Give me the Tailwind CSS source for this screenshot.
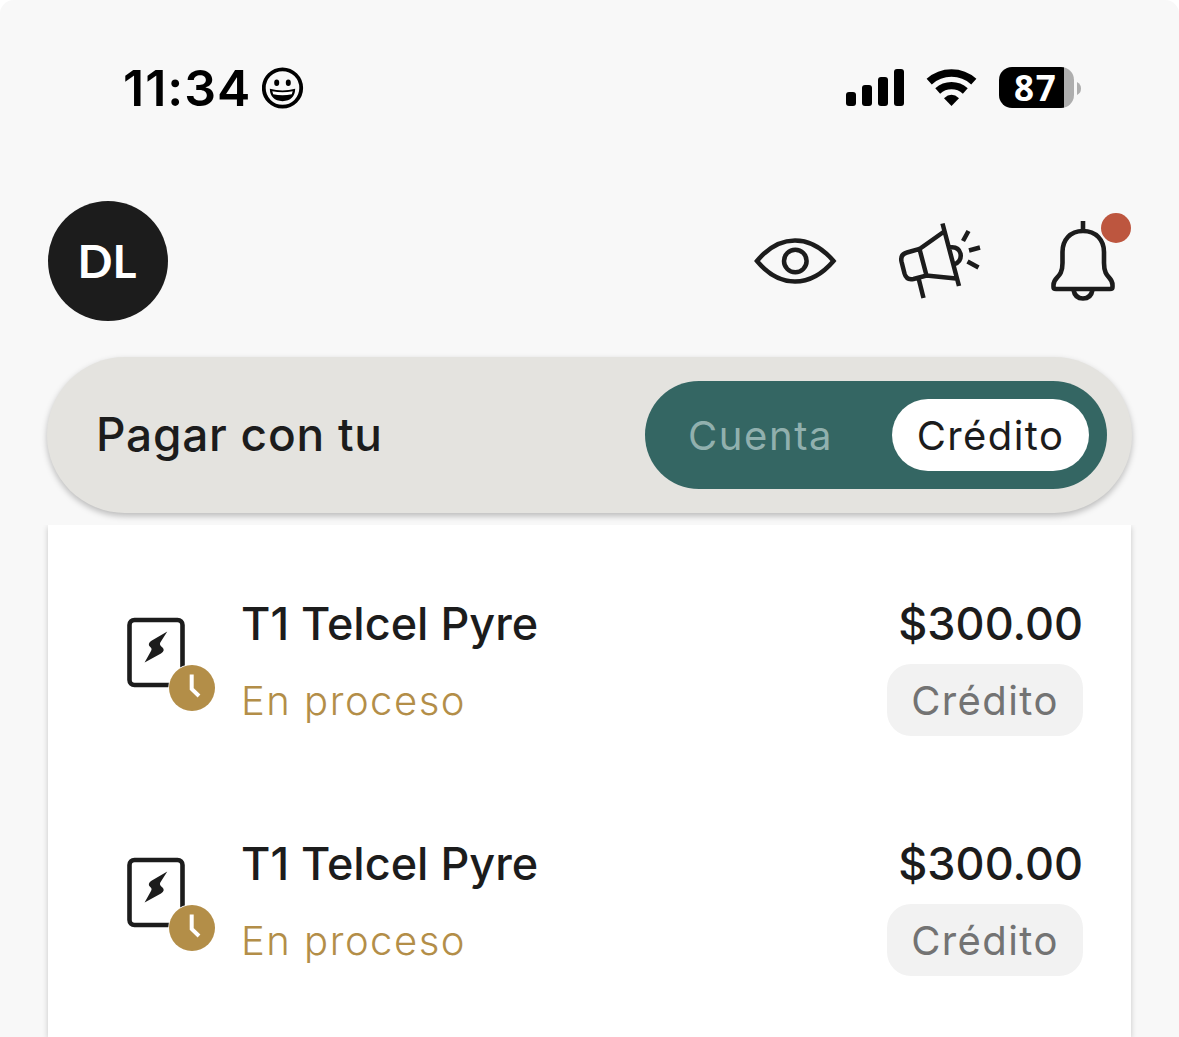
<!DOCTYPE html>
<html lang="es">
<head>
<meta charset="utf-8">
<title>Pagos</title>
<script src="https://cdn.jsdelivr.net/npm/@tailwindcss/browser@4"></script>
</head>
<body class="bg-white font-['Inter',sans-serif] text-[#1c1c1c]">
<svg class="hidden">
  <symbol id="receipt" viewBox="120 610 100 106">
    <rect x="129.500" y="620" width="53" height="65" rx="5" fill="none" stroke="#1c1c1c" stroke-width="4.600"/>
    <path d="M167.300 631.500L151 641Q147.200 644 150 646.800Q152.500 648.500 151 651L144.600 662.500L161 653.500Q165.500 650.500 162.500 647.500Q159 645 160.300 642.500Z" fill="#1c1c1c"/>
    <circle cx="192" cy="688" r="23.800" fill="#fff"/>
    <circle cx="192" cy="688" r="23" fill="#b38e48"/>
    <path d="M191.700 674.500V689L199 696" fill="none" stroke="#fff" stroke-width="4"/>
  </symbol>
</svg>
<div class="w-[1179px] h-[1037px] overflow-hidden bg-[#f8f8f8] rounded-t-[14px] flex flex-col">
  <header class="h-[176px] pl-[123px] pr-[98px] flex items-center">
    <span class="text-[50px] leading-[60px] font-semibold text-black w-[139px] tracking-[1px] whitespace-nowrap">11:34</span>
    <svg class="w-[42px] h-[42px]" viewBox="0 0 42 42">
      <circle cx="20.500" cy="21" r="18.700" fill="none" stroke="#000" stroke-width="3.800"/>
      <ellipse cx="14.700" cy="15.800" rx="2.500" ry="3.200"/><ellipse cx="26.300" cy="15.800" rx="2.500" ry="3.200"/>
      <path d="M7.800 21.800Q20.500 25 33.200 21.800Q32.800 33.800 20.500 34.200Q8.200 33.800 7.800 21.800Z"/>
      <path d="M10.300 24.200Q20.500 26.500 30.700 24.200L29.800 27.200Q20.500 29.200 11.200 27.200Z" fill="#fff"/>
    </svg>
    <svg class="ml-auto w-[60px] h-[38px]" viewBox="0 0 60 38">
      <rect x="1" y="23" width="10" height="14" rx="3"/><rect x="17" y="16" width="10" height="21" rx="3"/><rect x="33" y="8" width="10" height="29" rx="3"/><rect x="49" y="0" width="10" height="37" rx="3"/>
    </svg>
    <svg class="ml-[20px] w-[54px] h-[38px]" viewBox="0 0 54 38">
      <path d="M4.200 12.600A33.200 33.200 0 0 1 48.800 12.600" fill="none" stroke="#000" stroke-width="7.700"/>
      <path d="M12.700 22A20.500 20.500 0 0 1 40.300 22" fill="none" stroke="#000" stroke-width="7.200"/>
      <path d="M26.500 37L19 29.200Q26.500 22.500 34 29.200Z"/>
    </svg>
    <div class="ml-[20px] mb-[1px] w-[75px] h-[41px] rounded-[13px] bg-[linear-gradient(to_right,#000_65px,#aeaeae_65px)] text-white pl-[15px] font-['Open_Sans',sans-serif] font-bold text-[35px] leading-[41px] tracking-[1.800px]">87</div>
    <svg class="ml-[3px] w-[4px] h-[13px]" viewBox="0 0 4 13"><path d="M0 0Q4 2 4 6.500Q4 11 0 13Z" fill="#aeaeae"/></svg>
  </header>

  <div class="h-[181px] pl-[48px] pt-[25px] flex items-start">
    <div class="w-[120px] h-[120px] rounded-full bg-[#1c1c1c] text-white flex items-center justify-center font-['Lato',sans-serif] font-bold text-[46px]"><span class="-mt-[2px] -ml-[2px]">DL</span></div>
    <svg class="ml-[572px] w-[260px] h-[120px]" viewBox="740 201 260 120" fill="none" stroke="#1c1c1c" stroke-width="4.500">
      <path d="M757 261Q774 240.500 795 240.500Q816 240.500 833.500 261Q816 281.500 795 281.500Q774 281.500 757 261Z"/>
      <circle cx="795.300" cy="261" r="11.300"/>
      <path d="M942.500 223.500L959 286M943.500 232L919.500 249L907 252.500Q900 254.500 901.500 261.500L904.500 273.500Q906.500 280.500 913.500 279L926.500 275.500L956 278.500M919.500 249L926.500 275.500M918.500 278L923.500 298M949 247.500Q958.500 246 960.500 253.500Q962 261.500 954 264.500M963 241L968.500 231M969 250.500L980 247.500M967.500 261.500L978.500 267.500"/>
    </svg>
    <svg class="ml-[30px] w-[120px] h-[120px]" viewBox="1030 201 120 120">
      <path d="M1083 221V231M1083 231C1070 231 1062.500 240 1062.500 252V263C1062.500 279 1053.500 276 1053.500 285V287Q1053.500 289 1056 289H1110Q1112.500 289 1112.500 287V285C1112.500 276 1104 279 1104 263V252C1104 240 1096 231 1083 231ZM1073.500 290Q1075 298.500 1083 298.500Q1091 298.500 1092.500 290" fill="none" stroke="#1c1c1c" stroke-width="4.600"/>
      <circle cx="1116" cy="228" r="15" fill="#bd563f"/>
    </svg>
  </div>

  <section class="relative z-10 mx-[47px] h-[156px] shrink-0 rounded-[78px] bg-[#e4e3df] shadow-[0_3px_6px_rgba(0,0,0,0.25)] flex items-center justify-between pl-[49px] pr-[25px]">
    <span class="-mt-[3px] text-[46px] leading-[56px] font-[450] tracking-[0.750px] whitespace-nowrap">Pagar con tu</span>
    <div class="w-[462px] h-[108px] rounded-full bg-[#346663] flex items-center pl-[43px] pr-[18px] justify-between text-[40px] leading-[48px]">
      <span class="mt-[2px] text-[#91b0ae] font-normal tracking-[1.600px]">Cuenta</span>
      <span class="w-[197px] h-[72px] rounded-full bg-white flex items-center justify-center pt-[2px] font-normal tracking-[1.400px]">Crédito</span>
    </div>
  </section>

  <main class="mt-[12px] ml-[48px] w-[1083px] h-[512px] shrink-0 bg-white shadow-[0_2px_6px_rgba(0,0,0,0.2)] [clip-path:inset(0_-8px_0_-8px)] pt-[60px]">
    <article class="h-[240px] pl-[72px] pr-[48px] flex items-start">
      <svg class="mt-[25px] w-[100px] h-[106px]"><use href="#receipt"/></svg>
      <div class="ml-[21px] pt-[12px]">
        <div class="text-[45px] leading-[54px] font-[450] tracking-[0px] whitespace-nowrap">T1 Telcel Pyre</div>
        <div class="mt-[24px] text-[40px] leading-[52px] font-light text-[#b38e48] tracking-[1.500px] whitespace-nowrap">En proceso</div>
      </div>
      <div class="ml-auto pt-[12px] flex flex-col items-end">
        <div class="text-[45px] leading-[54px] font-[450] tracking-[0px]">$300.00</div>
        <div class="mt-[13px] w-[196px] h-[72px] rounded-[24px] bg-[#f2f2f2] text-[#737373] text-[40px] leading-[48px] tracking-[1.400px] flex items-center justify-center pt-[2px]">Crédito</div>
      </div>
    </article>
    <article class="h-[240px] pl-[72px] pr-[48px] flex items-start">
      <svg class="mt-[25px] w-[100px] h-[106px]"><use href="#receipt"/></svg>
      <div class="ml-[21px] pt-[12px]">
        <div class="text-[45px] leading-[54px] font-[450] tracking-[0px] whitespace-nowrap">T1 Telcel Pyre</div>
        <div class="mt-[24px] text-[40px] leading-[52px] font-light text-[#b38e48] tracking-[1.500px] whitespace-nowrap">En proceso</div>
      </div>
      <div class="ml-auto pt-[12px] flex flex-col items-end">
        <div class="text-[45px] leading-[54px] font-[450] tracking-[0px]">$300.00</div>
        <div class="mt-[13px] w-[196px] h-[72px] rounded-[24px] bg-[#f2f2f2] text-[#737373] text-[40px] leading-[48px] tracking-[1.400px] flex items-center justify-center pt-[2px]">Crédito</div>
      </div>
    </article>
  </main>
</div>
</body>
</html>
